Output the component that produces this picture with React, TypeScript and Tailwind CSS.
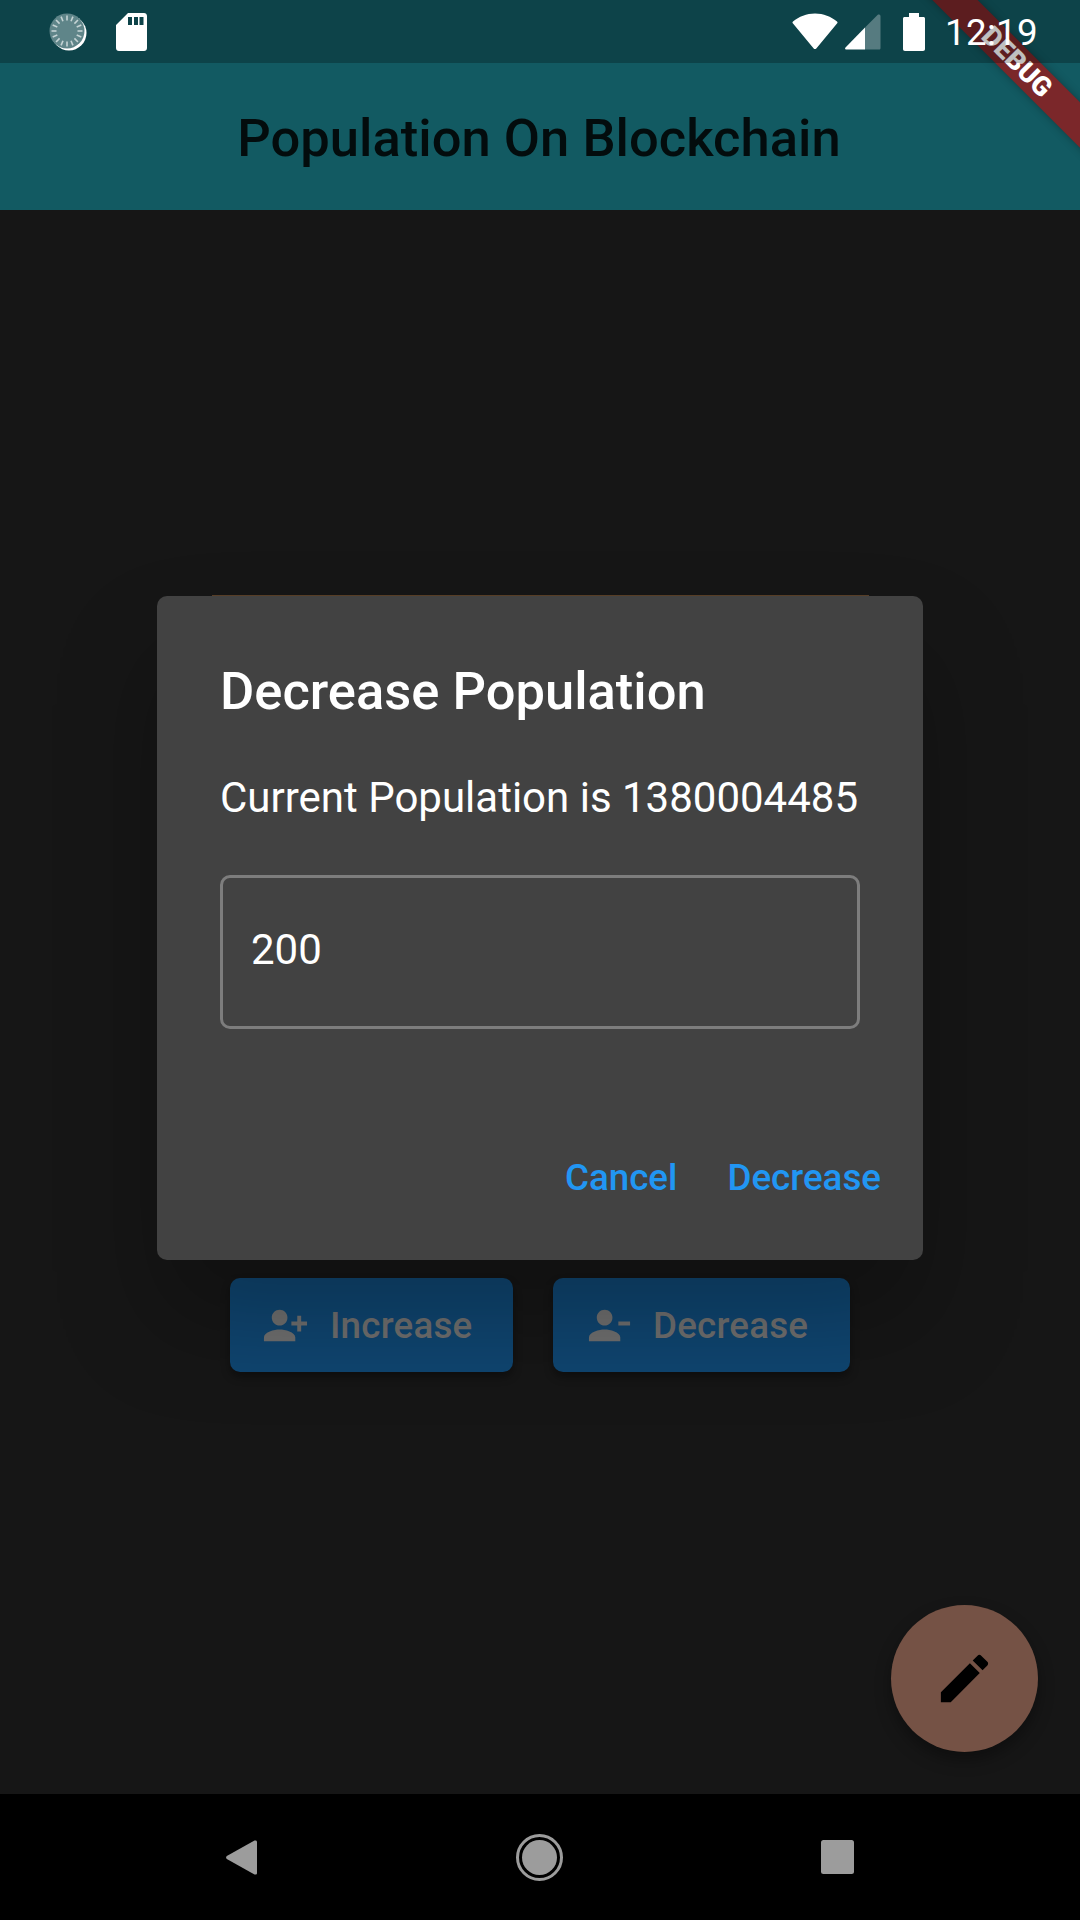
import React from 'react';

const Wifi = () => (
  <svg width="46" height="37" viewBox="0 0 46 37" className="fill-white">
    <path d="M1 8.500C7 3.500 14.500 .5 23 .5S39 3.500 45 8.500c.6.5.7 1.300.2 1.800L24.300 35.500c-.7.800-2 .8-2.600 0L.8 10.300c-.5-.5-.4-1.300.2-1.800z" />
  </svg>
);

const Signal = () => (
  <svg width="36" height="36" viewBox="0 0 36 36">
    <path className="fill-white" d="M.5 33.500 20 13.500V35.500H1.500C.2 35.500-.4 34.500.5 33.500z" />
    <path className="fill-white opacity-30" d="M20 13.500 32.500 1c1-1 3-.4 3 1V34c0 1-.6 1.500-1.500 1.500H20V13.500z" />
  </svg>
);

const Battery = () => (
  <svg width="22" height="38" viewBox="0 0 22 38" className="fill-white">
    <path d="M6 4V0h10v4h4.500c.8 0 1.500.7 1.500 1.500V36c0 1-.7 2-2 2H2c-1.300 0-2-1-2-2V5.500C0 4.700.7 4 1.500 4H6z" />
  </svg>
);

const SdCard = () => (
  <svg width="31" height="38" viewBox="0 0 31 38" className="fill-white">
    <path
      fillRule="evenodd"
      d="M12 0h16c1.700 0 3 1.300 3 3v32c0 1.700-1.300 3-3 3H3c-1.700 0-3-1.300-3-3V12L12 0zM12 4v8h4V4h-4zm6 0v8h4V4h-4zm5.500 0v8h4V4h-4z"
    />
  </svg>
);

// loading spinner notification icon
const Spinner = () => {
  const ticks = Array.from({ length: 16 }, (_, i) => i * 22.5);
  return (
    <svg width="38" height="38" viewBox="0 0 38 38">
      <circle cx="20" cy="20" r="17.500" fill="#ffffff" />
      <circle cx="18" cy="18" r="17.500" fill="#5f8589" />
      {ticks.map(a => (
        <rect key={a} x="17.200" y="2.500" width="1.600" height="5" fill="#c4d3d4" transform={`rotate(${a} 18 18)`} />
      ))}
    </svg>
  );
};

const PersonPlus = () => (
  <svg width="47" height="47" viewBox="0 0 24 24" className="fill-[#6f6f6f]">
    <path d="M13 8c0-2.210-1.790-4-4-4S5 5.790 5 8s1.790 4 4 4 4-1.790 4-4zm2 2v2h3v3h2v-3h3v-2h-3V7h-2v3h-3zM1 18v2h16v-2c0-2.660-5.330-4-8-4s-8 1.340-8 4z" />
  </svg>
);

const PersonMinus = () => (
  <svg width="47" height="47" viewBox="0 0 24 24" className="fill-[#6f6f6f]">
    <path d="M13 8c0-2.210-1.790-4-4-4S5 5.790 5 8s1.790 4 4 4 4-1.790 4-4zm3 2v2h6v-2h-6zM1 18v2h16v-2c0-2.660-5.330-4-8-4s-8 1.340-8 4z" />
  </svg>
);

const ActionButton: React.FC<{ label: string; className: string; icon: React.ReactNode }> = ({ label, className, icon }) => (
  <div className={`${className} h-[94px] rounded-[10px] bg-[#0f4570] flex items-center shadow-[0_5px_8px_rgba(0,0,0,0.35)]`}>
    {icon}
    <span className="relative top-px text-[36.750px] font-medium tracking-[0.2px] text-[#6f6f6f]">{label}</span>
  </div>
);

export default function App() {
  return (
    <div className="relative w-[1080px] h-[1920px] overflow-hidden flex flex-col bg-[#161616] font-['Roboto',sans-serif]">
      <div className="h-[210px] pt-[63px] pr-[2px] bg-[#125a62] flex items-center justify-center">
        <span className="relative top-[2px] text-[52.500px] font-medium tracking-[0.03px] text-[#030c0d]">Population On Blockchain</span>
      </div>

      <main className="flex-1 relative">
        <div className="flex justify-center gap-[40px] pt-[1068px]">
          <ActionButton label="Increase" className="w-[283px] pl-[32px] gap-[21px]" icon={<PersonPlus />} />
          <ActionButton label="Decrease" className="w-[297px] pl-[34px] gap-[19px]" icon={<PersonMinus />} />
        </div>

        {/* fab */}
        <div className="absolute left-[891px] top-[1395px] w-[147px] h-[147px] rounded-full bg-[#755245] flex items-center justify-center shadow-[0_8px_16px_rgba(0,0,0,0.35)]">
          <svg width="63" height="63" viewBox="0 0 24 24" className="fill-black">
            <path d="M3 17.250V21h3.750L17.810 9.940l-3.750-3.750L3 17.250zM20.710 7.040c.390-.390.390-1.020 0-1.410l-2.340-2.340c-.390-.390-1.020-.390-1.410 0l-1.830 1.830 3.750 3.750 1.830-1.830z" />
          </svg>
        </div>

        {/* dialog */}
        <div className="absolute left-[212px] top-[385px] w-[657px] h-px bg-[#5a4028]" />
        <div className="absolute left-[157px] top-[386px] w-[766px] h-[664px] rounded-[10px] bg-[#424242] shadow-[0_60px_100px_rgba(0,0,0,0.25)] flex flex-col pt-[57px] pl-[63px] pr-[42px]">
          <h2 className="text-[52.500px] leading-[76px] font-medium text-white">Decrease Population</h2>
          <p className="mt-[39px] text-[42px] leading-[60px] text-white">Current Population is 1380004485</p>
          <div className="mt-[47px] w-[640px] h-[154px] rounded-[10px] border-[3px] border-[#7d7d7d] flex items-center pl-[28px] pb-[6px]">
            <span className="text-[42px] text-white">200</span>
          </div>
          <div className="mt-[124px] flex justify-end gap-[50px] text-[36.750px] font-medium text-[#2196f3] leading-[50px]">
            <span>Cancel</span>
            <span>Decrease</span>
          </div>
        </div>
      </main>

      <div className="h-[126px] bg-black flex items-center">
        <svg className="ml-[226px]" width="31" height="35" viewBox="0 0 31 35">
          <path fill="#9c9c9c" d="M.8 16 28.500.6C30 0 31 .8 31 2v31c0 1.200-1 2-2.500 1.400L.8 19c-1-.7-1-2.300 0-3z" />
        </svg>
        <svg className="ml-[259px]" width="47" height="47" viewBox="0 0 47 47">
          <circle cx="23.500" cy="23.500" r="22" fill="none" stroke="#9c9c9c" strokeWidth="3" />
          <circle cx="23.500" cy="23.500" r="17.500" fill="#9c9c9c" />
        </svg>
        <svg className="ml-[258px]" width="33" height="34" viewBox="0 0 33 34">
          <rect width="33" height="34" rx="2.500" fill="#9c9c9c" />
        </svg>
      </div>

      {/* debug banner, the system status bar darkens it */}
      <div className="absolute top-[46px] right-[-57px] w-[240px] h-[32px] rotate-45 bg-[#7b272a] flex items-center justify-center shadow-[0_0_8px_rgba(0,0,0,0.3)]">
        <span className="text-[27px] font-black text-white leading-none">DEBUG</span>
      </div>

      {/* status bar */}
      <div className="absolute top-0 inset-x-0 h-[63px] bg-black/25 flex items-center pl-[49px] pr-[42px] text-white">
        <Spinner />
        <div className="ml-[29px]">
          <SdCard />
        </div>
        <div className="ml-auto flex items-center">
          <Wifi />
          <div className="ml-[7px]">
            <Signal />
          </div>
          <div className="ml-[22px]">
            <Battery />
          </div>
          <span className="relative top-[2px] ml-[20px] text-[36.750px] leading-none tracking-[0.3px]">12:19</span>
        </div>
      </div>
    </div>
  );
}
